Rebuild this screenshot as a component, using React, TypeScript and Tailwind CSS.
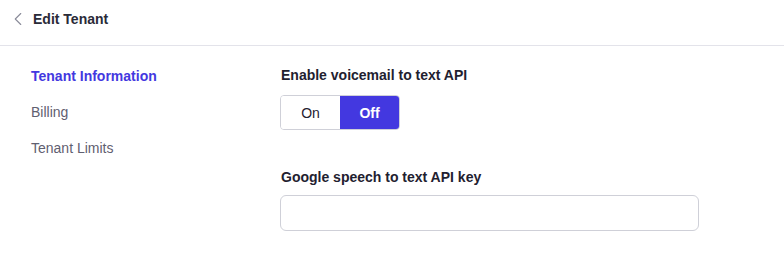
import { ChevronLeft } from "lucide-react";

export default function App() {
    return (
        <div className="h-[261px] w-[784px] bg-white font-['Liberation_Sans',Arial,sans-serif] text-[14px] leading-[20px] text-[#1f2130]">
            {/* Header */}
            <div className="flex h-[46px] items-start border-b border-[#e3e3ea] pl-[7px] pt-[8px]">
                <ChevronLeft size={22} strokeWidth={1.2} className="text-[#8a8b99]" />
                <h1 className="ml-[4px] mt-px font-bold text-[#2a2b38]">Edit Tenant</h1>
            </div>

            <div className="flex">
                {/* Sidebar */}
                <nav className="flex w-[280px] flex-col gap-[16px] pl-[31px] pt-[20px]">
                    <a className="font-bold text-[#4338e0]">Tenant Information</a>
                    <a className="text-[#5f6070]">Billing</a>
                    <a className="text-[#5f6070]">Tenant Limits</a>
                </nav>

                {/* Content */}
                <div className="flex flex-col pt-[19px]">
                    <label className="pl-px font-bold">Enable voicemail to text API</label>
                    <div className="mt-[10px] flex h-[35px] w-[120px] overflow-hidden rounded-[4px] border border-[#cfd0d8]">
                        <button className="flex-1 bg-white text-[#1f2130]">On</button>
                        <button className="w-[59px] bg-[#4338e0] font-bold text-white">Off</button>
                    </div>

                    <label className="mt-[37px] pl-px font-bold">Google speech to text API key</label>
                    <input className="mt-[8px] h-[36px] w-[419px] rounded-[6px] border border-[#cfd0d8] px-3 outline-none" />
                </div>
            </div>
        </div>
    );
}
